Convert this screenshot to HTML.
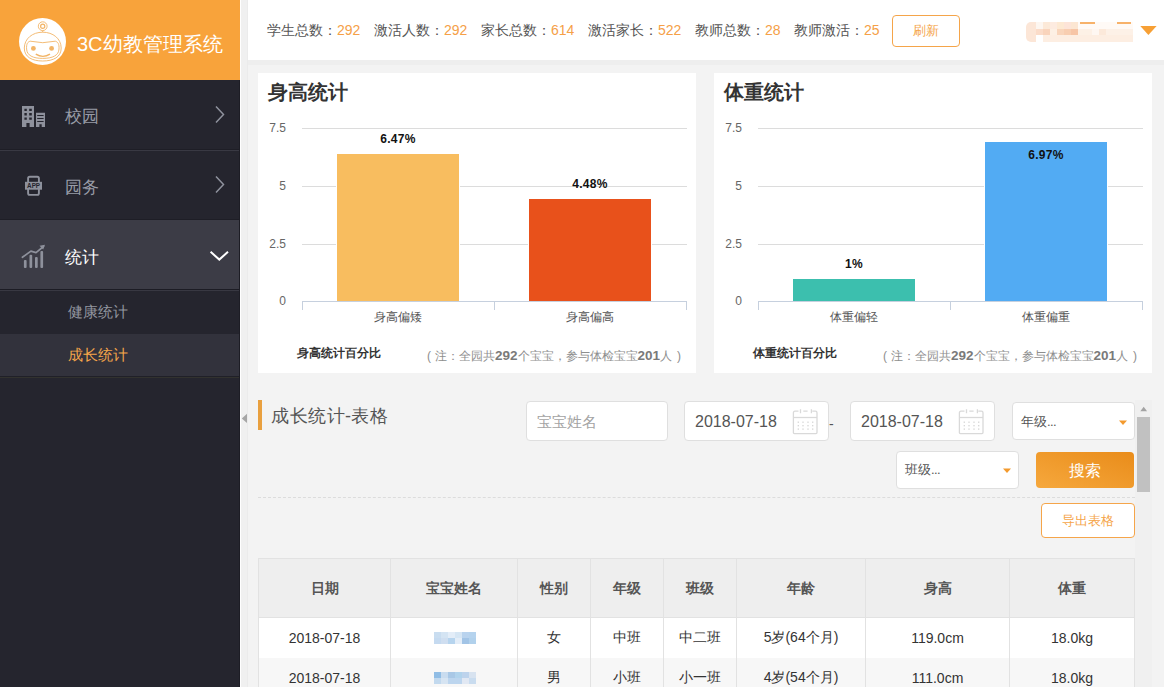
<!DOCTYPE html>
<html><head><meta charset="utf-8">
<style>
*{margin:0;padding:0;box-sizing:border-box;}
html,body{width:1164px;height:687px;overflow:hidden;}
body{font-family:"Liberation Sans",sans-serif;background:#f3f3f3;position:relative;color:#333;}
.abs{position:absolute;}
#side{position:absolute;left:0;top:0;width:240px;height:687px;background:#25252e;}
#logo{position:absolute;left:0;top:0;width:240px;height:80px;background:#f8a33b;}
#logo .t{position:absolute;left:77px;top:31px;font-size:20px;color:#fff;line-height:26px;white-space:nowrap;}
.mi{position:absolute;left:0;width:240px;height:70px;border-top:1px solid #393943;border-bottom:1px solid #1e1e26;}
.mi .tx{position:absolute;left:65px;top:28px;font-size:17px;line-height:20px;color:#989ca7;}
.sub{position:absolute;left:0;width:240px;height:43px;}
.sub .tx{position:absolute;left:68px;top:12px;font-size:15px;line-height:18px;color:#92959f;}
#top{position:absolute;left:248px;top:0;width:916px;height:60px;background:#fff;}
.stat{position:absolute;top:20px;font-size:14px;line-height:20px;color:#555;white-space:nowrap;}
.stat b{font-weight:normal;color:#f5a047;}
.card{position:absolute;top:73px;width:438px;height:300px;background:#fff;}
.card h3{position:absolute;left:10px;top:6px;font-size:20px;line-height:26px;color:#333;font-weight:bold;}
.yl{position:absolute;font-size:12px;color:#666;line-height:12px;text-align:right;width:30px;}
.grid{position:absolute;height:1px;background:#dcdcdc;}
.bar{position:absolute;box-shadow:-1px 0 0 #fff,1px 0 0 #fff,0 -1px 0 #fff;}
.bl{position:absolute;font-size:12px;font-weight:bold;color:#111;line-height:12px;text-align:center;width:122px;margin-top:-1px;letter-spacing:0.3px;}
.xl{position:absolute;font-size:12px;color:#555;line-height:12px;text-align:center;width:192px;margin-top:-1px;}
.foot{position:absolute;font-size:12px;font-weight:bold;color:#333;line-height:14px;white-space:nowrap;}
.note{position:absolute;font-size:12px;color:#8e8e8e;line-height:14px;white-space:nowrap;}
.note b{color:#7a7a7a;font-size:13.5px;}
.inp{position:absolute;background:#fff;border:1px solid #dfdfdf;border-radius:4px;}
th,td{font-weight:normal;}
#tbl{border-collapse:collapse;table-layout:fixed;width:876px;}
#tbl th,#tbl td{border:1px solid #e2e2e2;text-align:center;color:#333;font-size:14px;}
#tbl .hd th{height:59px;background:#eeeeee;font-weight:bold;font-size:14px;color:#555;padding-top:1px;}
#tbl .r1 td{height:40px;background:#fff;border-bottom:none;}
#tbl .r2 td{height:40px;background:#f7f7f7;border-top:none;padding-top:2px;}
.blur1,.blur2{display:inline-block;width:42px;height:12px;vertical-align:middle;background:linear-gradient(90deg,#dde9f6 0 14%,#c5dcf2 14% 40%,#dde9f6 40% 55%,#b7d3ef 55% 100%);}
.blur2{background:linear-gradient(90deg,#b7d3ef 0 30%,#c9def3 30% 55%,#dde9f6 55% 75%,#cfe1f4 75% 100%);}

</style></head>
<body>
<div id="side">
  <div id="logo">
    <svg class="abs" style="left:0;top:0" width="80" height="80" viewBox="0 0 80 80">
      <circle cx="42.5" cy="41.5" r="23.5" fill="#fff"/>
      <g fill="none" stroke="#f2b466" stroke-width="0.9">
        <circle cx="42.7" cy="26.2" r="4.4"/>
        <circle cx="42.7" cy="26.2" r="2.1" stroke-width="1.2"/>
        <path d="M42.7 30.6 L42.7 32.2"/>
        <path d="M24.3 48 C24.5 38.5 32.5 32.2 42.7 32.2 C53 32.2 61 38.5 61.2 48 C61.2 57 53.5 61 42.7 61 C32 61 24.3 57 24.3 48 Z"/>
        <path d="M26.6 49 C26.3 44 27.5 42 30.2 41.2 Q42.7 44.2 55.3 41.2 C58 42 59.3 44 59 49 C58.7 55.5 52.5 58.4 42.7 58.4 C33 58.4 26.9 55.5 26.6 49 Z"/>
        <path d="M35.8 54.2 Q42.9 58.6 50 54.2" stroke-width="1.4"/>
      </g>
      <circle cx="33.4" cy="48.4" r="2.4" fill="#f2b466"/>
      <circle cx="51.6" cy="48.4" r="2.4" fill="#f2b466"/>
    </svg>
    <div class="t">3C幼教管理系统</div>
  </div>
  <div class="mi" style="top:80px;border-top:none;">
    <svg class="abs" style="left:0;top:0" width="60" height="70" viewBox="0 0 60 70">
      <g fill="#8e919c">
        <path d="M22 26 H34 V47 H29.6 V43.1 H26.4 V47 H22 Z M24.4 28.7 V30.9 H26.8 V28.7 Z M29.2 28.7 V30.9 H31.8 V28.7 Z M24.4 33.1 V35.5 H26.8 V33.1 Z M29.2 33.1 V35.5 H31.8 V33.1 Z M24.4 37.5 V39.7 H26.8 V37.5 Z M29.2 37.5 V39.7 H31.8 V37.5 Z"/>
        <path d="M36 32.7 H45 V47 H41.7 V44.2 H39.4 V47 H36 Z M37.2 35 V36 H43.6 V35 Z M37.2 37.9 V38.9 H43.6 V37.9 Z M37.2 40.9 V41.9 H43.6 V40.9 Z"/>
      </g>
    </svg>
    <div class="tx" style="top:27px;">校园</div>
    <svg class="abs" style="left:210px;top:20px" width="20" height="30" viewBox="0 0 20 30"><path d="M6 6.5 L13.5 14.5 L6 22.5" fill="none" stroke="#8f929d" stroke-width="1.5"/></svg>
  </div>
  <div class="mi" style="top:150px;">
    <svg class="abs" style="left:0;top:-1px" width="60" height="70" viewBox="0 0 60 70">
      <rect x="28.1" y="26.8" width="10.8" height="18.1" rx="1.6" fill="none" stroke="#8e919c" stroke-width="1.9"/>
      <rect x="25" y="31.8" width="17" height="7.9" fill="#8e919c"/>
      <text x="33.6" y="37.9" font-size="6.6" font-weight="bold" text-anchor="middle" fill="#25252e" font-family="Liberation Sans" textLength="13" lengthAdjust="spacingAndGlyphs">APP</text>
    </svg>
    <div class="tx" style="top:27px;">园务</div>
    <svg class="abs" style="left:210px;top:19px" width="20" height="30" viewBox="0 0 20 30"><path d="M6 6.5 L13.5 14.5 L6 22.5" fill="none" stroke="#8f929d" stroke-width="1.5"/></svg>
  </div>
  <div class="mi" style="top:220px;background:#3c3c46;border-top:none;border-bottom:1px solid #1c1c24;height:70px;">
    <svg class="abs" style="left:0;top:0" width="60" height="70" viewBox="0 0 60 70">
      <g fill="#8e919c">
        <rect x="23.9" y="40" width="2.7" height="8" rx="1"/>
        <rect x="29.5" y="34.8" width="2.7" height="13.2" rx="1"/>
        <rect x="35" y="37" width="2.7" height="11" rx="1"/>
        <rect x="40.4" y="31.1" width="2.7" height="16.9" rx="1"/>
        <path d="M39.5 25.8 L45 24.8 L43.2 29.5 Z"/>
      </g>
      <path d="M22.4 37.3 L30.9 31.1 L36 32.6 L43.5 26.5" fill="none" stroke="#8e919c" stroke-width="1.7" stroke-linejoin="round" stroke-linecap="round"/>
    </svg>
    <div class="tx" style="color:#fff;">统计</div>
    <svg class="abs" style="left:205px;top:22px" width="28" height="24" viewBox="0 0 28 24"><path d="M5.6 9.8 L14.3 17.6 L23 9.8" fill="none" stroke="#fff" stroke-width="2"/></svg>
  </div>
  <div class="sub" style="top:290px;border-top:1px solid #383842;height:44px;"><div class="tx">健康统计</div></div>
  <div class="sub" style="top:334px;background:#32323c;border-bottom:1px solid #202028;"><div class="abs" style="left:0;top:43px;width:240px;height:1px;background:#32322f;"></div><div class="tx" style="color:#f5a54a;">成长统计</div></div>
</div>

<div id="top">
  <div class="stat" style="left:19px;">学生总数：<b>292</b></div>
  <div class="stat" style="left:126px;">激活人数：<b>292</b></div>
  <div class="stat" style="left:233px;">家长总数：<b>614</b></div>
  <div class="stat" style="left:340px;">激活家长：<b>522</b></div>
  <div class="stat" style="left:447px;">教师总数：<b>28</b></div>
  <div class="stat" style="left:546px;">教师激活：<b>25</b></div>
  <div class="abs" style="left:644px;top:15px;width:68px;height:32px;border:1px solid #f5a54a;border-radius:4px;color:#f5a54a;font-size:13px;line-height:30px;text-align:center;">刷新</div>
  <svg class="abs" style="left:778px;top:22px" width="107" height="20" viewBox="0 0 107 20"><g><rect x="6" y="0" width="101" height="20" fill="#fdf1e7"/><rect x="0" y="0" width="10" height="20" rx="5" fill="#fce6d7"/><rect x="5" y="0" width="5" height="20" fill="#fce6d7"/><rect x="10" y="0" width="7" height="7" fill="#fdf6f0"/><rect x="17" y="0" width="7" height="7" fill="#fce9d8"/><rect x="24" y="0" width="7" height="7" fill="#fdebe0"/><rect x="31" y="0" width="7" height="7" fill="#fde9d3"/><rect x="38" y="0" width="7" height="7" fill="#fde4d8"/><rect x="45" y="0" width="7" height="7" fill="#fce6d2"/><rect x="52" y="0" width="55" height="7" fill="#fffaf6"/><rect x="10" y="7" width="7" height="6" fill="#fbdcc9"/><rect x="17" y="7" width="7" height="6" fill="#f9d4bc"/><rect x="24" y="7" width="7" height="6" fill="#fdf0e4"/><rect x="31" y="7" width="7" height="6" fill="#f9d5bb"/><rect x="38" y="7" width="7" height="6" fill="#f8ceb1"/><rect x="45" y="7" width="7" height="6" fill="#f7c5a6"/><rect x="52" y="7" width="14" height="6" fill="#fdf1e6"/><rect x="66" y="7" width="7" height="6" fill="#fef7f2"/><rect x="73" y="7" width="7" height="6" fill="#fce9da"/><rect x="80" y="7" width="27" height="6" fill="#fdf1e7"/><rect x="10" y="13" width="7" height="7" fill="#ffffff"/><rect x="17" y="13" width="90" height="7" fill="#fdeee2"/><rect x="54" y="0" width="15" height="2" fill="#f7b26a"/><rect x="91" y="0" width="14" height="2" fill="#f7b26a"/></g></svg>
  <svg class="abs" style="left:890px;top:24px" width="20" height="14" viewBox="0 0 20 14"><path d="M2.3 2.1 H18.6 L10.4 10.9 Z" fill="#f7a035"/></svg>
</div>

<div class="card" style="left:258px;">
<h3>身高统计</h3>
<div class="yl" style="left:-2px;top:49px;">7.5</div>
<div class="yl" style="left:-2px;top:107px;">5</div>
<div class="yl" style="left:-2px;top:165px;">2.5</div>
<div class="yl" style="left:-2px;top:222px;">0</div>
<div class="grid" style="left:44px;top:55px;width:385px;"></div>
<div class="grid" style="left:44px;top:113px;width:385px;"></div>
<div class="grid" style="left:44px;top:171px;width:385px;"></div>
<div class="grid" style="left:44px;top:228px;width:385px;background:#c6d0de;"></div>
<div class="grid" style="left:44px;top:228px;width:1px;height:9px;background:#c6d0de;"></div>
<div class="grid" style="left:236px;top:228px;width:1px;height:9px;background:#c6d0de;"></div>
<div class="grid" style="left:428px;top:228px;width:1px;height:9px;background:#c6d0de;"></div>
<div class="bar" style="left:79px;top:81px;width:122px;height:147px;background:#f8bd5f;"></div>
<div class="bl" style="left:79px;top:61px;">6.47%</div>
<div class="bar" style="left:271px;top:126px;width:122px;height:102px;background:#e8511b;"></div>
<div class="bl" style="left:271px;top:106px;">4.48%</div>
<div class="xl" style="left:44px;top:239px;">身高偏矮</div>
<div class="xl" style="left:236px;top:239px;">身高偏高</div>
<div class="foot" style="left:39px;top:273px;">身高统计百分比</div>
<div class="note" style="left:169px;top:276px;"><span style="margin-right:4px;">(</span>注：全园共<b>292</b>个宝宝，参与体检宝宝<b>201</b>人<span style="margin-left:5px;">)</span></div>
</div>
<div class="card" style="left:714px;">
<h3>体重统计</h3>
<div class="yl" style="left:-2px;top:49px;">7.5</div>
<div class="yl" style="left:-2px;top:107px;">5</div>
<div class="yl" style="left:-2px;top:165px;">2.5</div>
<div class="yl" style="left:-2px;top:222px;">0</div>
<div class="grid" style="left:44px;top:55px;width:385px;"></div>
<div class="grid" style="left:44px;top:113px;width:385px;"></div>
<div class="grid" style="left:44px;top:171px;width:385px;"></div>
<div class="grid" style="left:44px;top:228px;width:385px;background:#c6d0de;"></div>
<div class="grid" style="left:44px;top:228px;width:1px;height:9px;background:#c6d0de;"></div>
<div class="grid" style="left:236px;top:228px;width:1px;height:9px;background:#c6d0de;"></div>
<div class="grid" style="left:428px;top:228px;width:1px;height:9px;background:#c6d0de;"></div>
<div class="bar" style="left:79px;top:206px;width:122px;height:22px;background:#3cbfae;"></div>
<div class="bl" style="left:79px;top:186px;">1%</div>
<div class="bar" style="left:271px;top:69px;width:122px;height:159px;background:#52abf3;"></div>
<div class="bl" style="left:271px;top:77px;">6.97%</div>
<div class="xl" style="left:44px;top:239px;">体重偏轻</div>
<div class="xl" style="left:236px;top:239px;">体重偏重</div>
<div class="foot" style="left:39px;top:273px;">体重统计百分比</div>
<div class="note" style="left:169px;top:276px;"><span style="margin-right:4px;">(</span>注：全园共<b>292</b>个宝宝，参与体检宝宝<b>201</b>人<span style="margin-left:5px;">)</span></div>
</div>


<!-- left collapse strip -->
<div class="abs" style="left:240px;top:0;width:8px;height:687px;background:#f0f0f0;border-left:1px solid #fff;border-right:1px solid #ebebeb;"></div>
<div class="abs" style="left:239px;top:80px;width:1px;height:607px;background:#1d1d25;"></div>
<div class="abs" style="left:248px;top:60px;width:916px;height:5px;background:#eeeeee;"></div>
<svg class="abs" style="left:240px;top:410px" width="8" height="16" viewBox="0 0 8 16"><path d="M7 3.8 L1.8 8.4 L7 12.9 Z" fill="#a6a6a6"/></svg>

<!-- section header -->
<div class="abs" style="left:258px;top:400px;width:4px;height:30px;background:#e9a03f;"></div>
<div class="abs" style="left:271px;top:404px;font-size:18px;line-height:24px;color:#555;white-space:nowrap;letter-spacing:0.5px;">成长统计-表格</div>

<div class="inp" style="left:526px;top:401px;width:142px;height:40px;"><div class="abs" style="left:10px;top:10px;font-size:15px;line-height:20px;color:#a3a3a3;">宝宝姓名</div></div>
<div class="inp" style="left:684px;top:401px;width:145px;height:40px;"><div class="abs" style="left:10px;top:10px;font-size:16px;line-height:20px;color:#555;">2018-07-18</div><svg class="abs" style="left:106px;top:5px" width="28" height="30" viewBox="0 0 28 30"><g fill="none" stroke="#d9d9d9" stroke-width="1.3"><path d="M7.5 4.2 H4 Q2.4 4.2 2.4 5.8 V25.8 Q2.4 26.6 3.4 26.6 H25 Q26 26.6 26 25.6 V5.8 Q26 4.2 24.4 4.2 H21.3 M12.3 4.2 H16.6"/><path d="M2.4 10.5 H26"/><path d="M9.5 2.3 V6.3 M20.4 2.3 V6.3"/></g><g fill="#d4d4d4"><rect x="6.6499999999999995" y="14.549999999999999" width="1.3" height="1.3"/><rect x="11.35" y="14.549999999999999" width="1.3" height="1.3"/><rect x="16.35" y="14.549999999999999" width="1.3" height="1.3"/><rect x="21.05" y="14.549999999999999" width="1.3" height="1.3"/><rect x="6.6499999999999995" y="18.05" width="1.3" height="1.3"/><rect x="11.35" y="18.05" width="1.3" height="1.3"/><rect x="16.35" y="18.05" width="1.3" height="1.3"/><rect x="21.05" y="18.05" width="1.3" height="1.3"/><rect x="6.6499999999999995" y="21.450000000000003" width="1.3" height="1.3"/><rect x="11.35" y="21.450000000000003" width="1.3" height="1.3"/><rect x="16.35" y="21.450000000000003" width="1.3" height="1.3"/><rect x="21.05" y="21.450000000000003" width="1.3" height="1.3"/></g></svg></div>
<div class="abs" style="left:829px;top:414px;font-size:14px;line-height:20px;color:#555;">-</div>
<div class="inp" style="left:850px;top:401px;width:145px;height:40px;"><div class="abs" style="left:10px;top:10px;font-size:16px;line-height:20px;color:#555;">2018-07-18</div><svg class="abs" style="left:106px;top:5px" width="28" height="30" viewBox="0 0 28 30"><g fill="none" stroke="#d9d9d9" stroke-width="1.3"><path d="M7.5 4.2 H4 Q2.4 4.2 2.4 5.8 V25.8 Q2.4 26.6 3.4 26.6 H25 Q26 26.6 26 25.6 V5.8 Q26 4.2 24.4 4.2 H21.3 M12.3 4.2 H16.6"/><path d="M2.4 10.5 H26"/><path d="M9.5 2.3 V6.3 M20.4 2.3 V6.3"/></g><g fill="#d4d4d4"><rect x="6.6499999999999995" y="14.549999999999999" width="1.3" height="1.3"/><rect x="11.35" y="14.549999999999999" width="1.3" height="1.3"/><rect x="16.35" y="14.549999999999999" width="1.3" height="1.3"/><rect x="21.05" y="14.549999999999999" width="1.3" height="1.3"/><rect x="6.6499999999999995" y="18.05" width="1.3" height="1.3"/><rect x="11.35" y="18.05" width="1.3" height="1.3"/><rect x="16.35" y="18.05" width="1.3" height="1.3"/><rect x="21.05" y="18.05" width="1.3" height="1.3"/><rect x="6.6499999999999995" y="21.450000000000003" width="1.3" height="1.3"/><rect x="11.35" y="21.450000000000003" width="1.3" height="1.3"/><rect x="16.35" y="21.450000000000003" width="1.3" height="1.3"/><rect x="21.05" y="21.450000000000003" width="1.3" height="1.3"/></g></svg></div>
<div class="inp" style="left:1012px;top:402px;width:123px;height:38px;"><div class="abs" style="left:8px;top:9px;font-size:13px;line-height:20px;color:#555;">年级<span style="letter-spacing:-0.6px;">...</span></div><svg class="abs" style="left:104px;top:15px" width="12" height="10" viewBox="0 0 12 10"><path d="M2 2.5 H10 L6 7 Z" fill="#f39a2d"/></svg></div>
<div class="inp" style="left:896px;top:451px;width:123px;height:38px;"><div class="abs" style="left:8px;top:8px;font-size:13px;line-height:20px;color:#555;">班级<span style="letter-spacing:-0.6px;">...</span></div><svg class="abs" style="left:104px;top:14px" width="12" height="10" viewBox="0 0 12 10"><path d="M2 2.5 H10 L6 7 Z" fill="#f39a2d"/></svg></div>
<div class="abs" style="left:1036px;top:452px;width:98px;height:36px;border-radius:4px;background:linear-gradient(200deg,#e98c1a,#f6a83d);color:#fff;font-size:16px;line-height:38px;text-align:center;">搜索</div>

<div class="abs" style="left:258px;top:497px;width:877px;height:0;border-top:1px dashed #dcdcdc;"></div>
<div class="abs" style="left:1041px;top:503px;width:94px;height:35px;background:#fff;border:1px solid #f5a54a;border-radius:4px;color:#f5a54a;font-size:13px;line-height:33px;text-align:center;">导出表格</div>

<!-- scrollbar -->
<div class="abs" style="left:1135px;top:400px;width:17px;height:287px;background:#f0f0f0;"></div>
<div class="abs" style="left:1137px;top:417px;width:13px;height:75px;background:#c1c1c1;"></div>
<svg class="abs" style="left:1138px;top:404px" width="12" height="10" viewBox="0 0 12 10"><path d="M2.3 7.2 L5.7 2.8 L9.1 7.2 Z" fill="#a3a3a3"/></svg>

<!-- table -->
<table id="tbl" class="abs" style="left:258px;top:558px;">
<colgroup><col style="width:132px"><col style="width:127px"><col style="width:73px"><col style="width:73px"><col style="width:73px"><col style="width:129px"><col style="width:144px"><col style="width:125px"></colgroup>
<tr class="hd"><th>日期</th><th>宝宝姓名</th><th>性别</th><th>年级</th><th>班级</th><th>年龄</th><th>身高</th><th>体重</th></tr>
<tr class="r1"><td>2018-07-18</td><td><span style="display:inline-block;margin-left:2px;position:relative;top:-1px;"><svg width="42" height="12" viewBox="0 0 42 12" style="vertical-align:middle;display:inline-block;"><rect x="0" y="0" width="7" height="6" fill="#c9ddf0"/><rect x="7" y="0" width="7" height="6" fill="#d4e4f3"/><rect x="14" y="0" width="7" height="6" fill="#e3edf8"/><rect x="21" y="0" width="7" height="6" fill="#d6e6f4"/><rect x="28" y="0" width="7" height="6" fill="#b9d3ee"/><rect x="35" y="0" width="7" height="6" fill="#b5d3ee"/><rect x="0" y="6" width="7" height="6" fill="#c5daf0"/><rect x="7" y="6" width="7" height="6" fill="#cfdef0"/><rect x="14" y="6" width="7" height="6" fill="#b6d4ee"/><rect x="21" y="6" width="7" height="6" fill="#e3edf8"/><rect x="28" y="6" width="7" height="6" fill="#a2c4e6"/><rect x="35" y="6" width="7" height="6" fill="#b1d1ec"/></svg></span></td><td>女</td><td>中班</td><td>中二班</td><td>5岁(64个月)</td><td>119.0cm</td><td>18.0kg</td></tr>
<tr class="r2"><td>2018-07-18</td><td><span style="display:inline-block;margin-left:2px;position:relative;top:-2px;"><svg width="42" height="12" viewBox="0 0 42 12" style="vertical-align:middle;display:inline-block;"><rect x="0" y="0" width="7" height="6" fill="#90bde5"/><rect x="7" y="0" width="7" height="6" fill="#c9dcef"/><rect x="14" y="0" width="7" height="6" fill="#a9c8e6"/><rect x="21" y="0" width="7" height="6" fill="#b1d3ec"/><rect x="28" y="0" width="7" height="6" fill="#bdd3ec"/><rect x="35" y="0" width="7" height="6" fill="#d8e3f0"/><rect x="0" y="6" width="7" height="6" fill="#c2d9ee"/><rect x="7" y="6" width="7" height="6" fill="#d6e4f2"/><rect x="14" y="6" width="7" height="6" fill="#bcd5ee"/><rect x="21" y="6" width="7" height="6" fill="#bcd5ee"/><rect x="28" y="6" width="7" height="6" fill="#e1e8f3"/><rect x="35" y="6" width="7" height="6" fill="#c9dcef"/></svg></span></td><td>男</td><td>小班</td><td>小一班</td><td>4岁(54个月)</td><td>111.0cm</td><td>18.0kg</td></tr>
</table>
</body></html>
